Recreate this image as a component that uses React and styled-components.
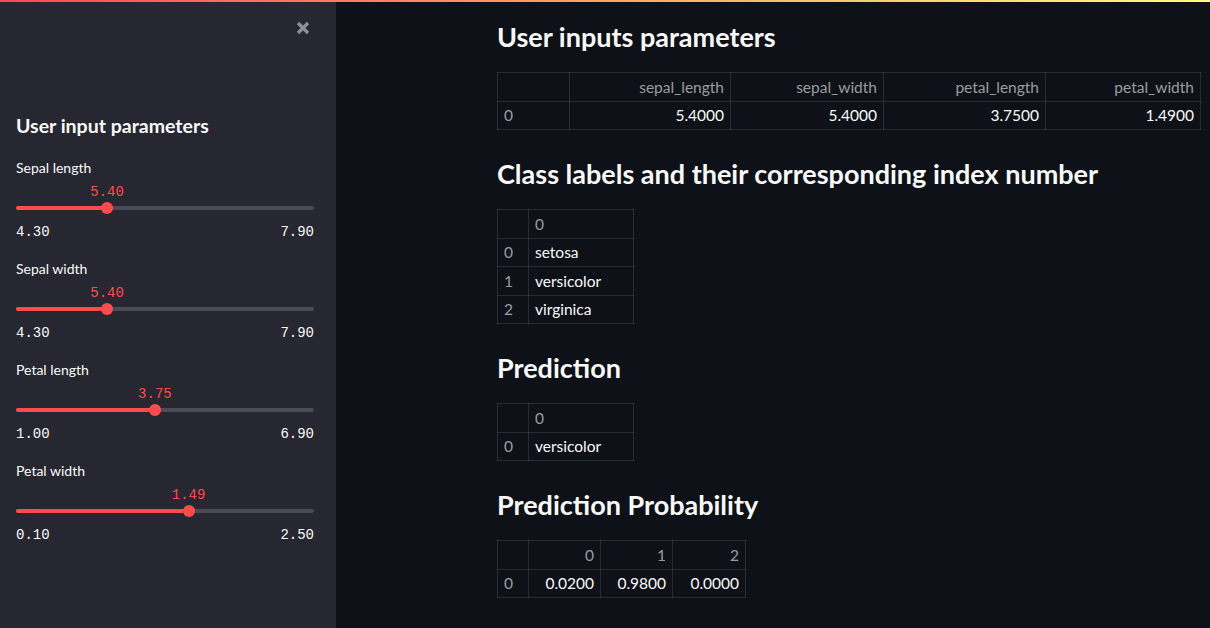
import styled, { createGlobalStyle } from "styled-components";

const GlobalStyle = createGlobalStyle`
  html, body {
    margin: 0;
    padding: 0;
    background: #0e1117;
    overflow: hidden;
  }
  * {
    box-sizing: border-box;
  }
`;

const SANS = `Lato, "Noto Sans", sans-serif`;
const MONO = `"Liberation Mono", "DejaVu Sans Mono", monospace`;
const RED = "#ff4b4b";

const Page = styled.div`
  display: flex;
  flex-direction: column;
  height: 100vh;
  font-family: ${SANS};
  color: #fafafa;
`;

const Decoration = styled.div`
  height: 2px;
  flex-shrink: 0;
  background: linear-gradient(90deg, #ff4b4b, #fffd80);
`;

const Body = styled.div`
  display: flex;
  flex: 1;
  min-height: 0;
`;

const Sidebar = styled.aside`
  width: 336px;
  flex-shrink: 0;
  background: #262730;
  padding: 14px 26px 0 16px;
  display: flex;
  flex-direction: column;
`;

const CloseRow = styled.div`
  display: flex;
  justify-content: flex-end;
  height: 24px;
  align-items: center;
`;

const CloseButton = styled.button`
  background: none;
  border: none;
  padding: 0;
  display: flex;
  color: #8f9096;
  cursor: pointer;
`;

const SidebarTitle = styled.h2`
  margin: 72px 0 18px;
  font-size: 19.5px;
  line-height: 28px;
  font-weight: 700;
`;

const SliderList = styled.div`
  display: flex;
  flex-direction: column;
  gap: 19px;
  width: 298px;
`;

const SliderBlock = styled.div`
  display: flex;
  flex-direction: column;
`;

const SliderLabel = styled.div`
  font-size: 14px;
  line-height: 20px;
`;

const ValueRow = styled.div`
  position: relative;
  height: 16px;
  margin-top: 6px;
`;

const ThumbValue = styled.span`
  position: absolute;
  top: 0;
  transform: translateX(-50%);
  font-family: ${MONO};
  font-size: 14px;
  line-height: 16px;
  color: ${RED};
`;

const Track = styled.div`
  position: relative;
  height: 4px;
  margin: 6px 0 4px;
  border-radius: 2px;
  background: #4a4b53;
`;

const Fill = styled.div`
  height: 100%;
  border-radius: 2px;
  background: ${RED};
`;

const Thumb = styled.div`
  position: absolute;
  top: 50%;
  width: 12px;
  height: 12px;
  border-radius: 50%;
  background: ${RED};
  transform: translate(-50%, -50%);
`;

const MinMax = styled.div`
  display: flex;
  justify-content: space-between;
  margin-top: 10px;
  font-family: ${MONO};
  font-size: 14px;
  line-height: 16px;
  color: #fafafa;
`;

const Main = styled.main`
  flex: 1;
  padding: 15px 0 0 161px;
  display: flex;
  flex-direction: column;
`;

const Heading = styled.h3`
  margin: 0 0 15px;
  font-size: 27px;
  line-height: 40px;
  font-weight: 700;
  &:not(:first-child) {
    margin-top: 24px;
  }
`;

const Table = styled.table`
  border-collapse: collapse;
  table-layout: fixed;
  font-size: 15.5px;
`;

const Cell = styled.td`
  border: 1px solid rgba(250, 250, 250, 0.12);
  height: 28.5px;
  padding: 0 6px;
  text-align: ${(p) => p.$align};
  color: ${(p) => (p.$muted ? "rgba(250,250,250,0.6)" : "#fafafa")};
  white-space: nowrap;
`;

function CloseIcon() {
  return (
    <svg width="14" height="14" viewBox="0 0 14 14">
      <path
        d="M2 2 L12 12 M12 2 L2 12"
        stroke="currentColor"
        strokeWidth="3.2"
        strokeLinecap="butt"
      />
    </svg>
  );
}

function Slider({ label, min, max, value }) {
  const pct = ((value - min) / (max - min)) * 100;
  return (
    <SliderBlock>
      <SliderLabel>{label}</SliderLabel>
      <ValueRow>
        <ThumbValue style={{ left: `${pct}%` }}>{value.toFixed(2)}</ThumbValue>
      </ValueRow>
      <Track>
        <Fill style={{ width: `${pct}%` }} />
        <Thumb style={{ left: `${pct}%` }} />
      </Track>
      <MinMax>
        <span>{min.toFixed(2)}</span>
        <span>{max.toFixed(2)}</span>
      </MinMax>
    </SliderBlock>
  );
}

function DataFrame({ widths, columns, rows, align }) {
  return (
    <Table style={{ width: widths.reduce((a, b) => a + b, 0) }}>
      <colgroup>
        {widths.map((w, i) => (
          <col key={i} style={{ width: w }} />
        ))}
      </colgroup>
      <tbody>
        <tr>
          <Cell $align="left" $muted />
          {columns.map((c) => (
            <Cell key={c} $align={align} $muted>
              {c}
            </Cell>
          ))}
        </tr>
        {rows.map((row, i) => (
          <tr key={i}>
            <Cell $align="left" $muted>
              {i}
            </Cell>
            {row.map((v, j) => (
              <Cell key={j} $align={align}>
                {v}
              </Cell>
            ))}
          </tr>
        ))}
      </tbody>
    </Table>
  );
}

const sliders = [
  { label: "Sepal length", min: 4.3, max: 7.9, value: 5.4 },
  { label: "Sepal width", min: 4.3, max: 7.9, value: 5.4 },
  { label: "Petal length", min: 1.0, max: 6.9, value: 3.75 },
  { label: "Petal width", min: 0.1, max: 2.5, value: 1.49 },
];

export default function App() {
  return (
    <>
      <GlobalStyle />
      <Page>
        <Decoration />
        <Body>
          <Sidebar>
            <CloseRow>
              <CloseButton aria-label="Close">
                <CloseIcon />
              </CloseButton>
            </CloseRow>
            <SidebarTitle>User input parameters</SidebarTitle>
            <SliderList>
              {sliders.map((s) => (
                <Slider key={s.label} {...s} />
              ))}
            </SliderList>
          </Sidebar>
          <Main>
            <Heading>User inputs parameters</Heading>
            <DataFrame
              widths={[72, 161, 153, 162, 155]}
              columns={["sepal_length", "sepal_width", "petal_length", "petal_width"]}
              rows={[["5.4000", "5.4000", "3.7500", "1.4900"]]}
              align="right"
            />
            <Heading>Class labels and their corresponding index number</Heading>
            <DataFrame
              widths={[31, 105]}
              columns={["0"]}
              rows={[["setosa"], ["versicolor"], ["virginica"]]}
              align="left"
            />
            <Heading>Prediction</Heading>
            <DataFrame
              widths={[31, 105]}
              columns={["0"]}
              rows={[["versicolor"]]}
              align="left"
            />
            <Heading>Prediction Probability</Heading>
            <DataFrame
              widths={[31, 72, 72, 73]}
              columns={["0", "1", "2"]}
              rows={[["0.0200", "0.9800", "0.0000"]]}
              align="right"
            />
          </Main>
        </Body>
      </Page>
    </>
  );
}
